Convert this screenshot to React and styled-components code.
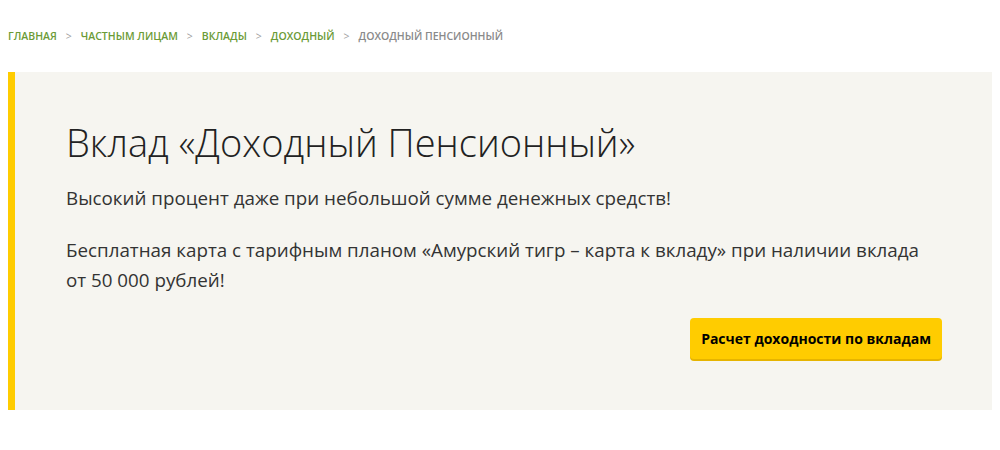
import React from "react";
import styled, { createGlobalStyle } from "styled-components";

const Global = createGlobalStyle`
  html, body { margin: 0; padding: 0; background: #ffffff; }
  body { font-family: "Open Sans", "Liberation Sans", sans-serif; color: #333; }
`;

const Page = styled.div`
  padding: 0 8px;
  width: 1000px;
  box-sizing: border-box;
`;

const Crumbs = styled.nav`
  display: flex;
  align-items: center;
  gap: 9px;
  height: 72px;
  font-family: "Open Sans", "Liberation Sans", sans-serif;
  font-size: 10.5px;
  font-weight: 600;
  text-transform: uppercase;
  padding-bottom: 1px;
  box-sizing: border-box;
`;

const Crumb = styled.a`
  color: ${(p) => (p.$current ? "#8a8a8a" : "#6b9b37")};
  text-decoration: none;
`;

const Sep = styled.span`
  color: #a0a0a0;
  font-weight: 400;
`;

const Panel = styled.section`
  background: #f6f5f0;
  border-left: 7px solid #ffcc00;
  padding: 45px 50px 51px 51px;
  height: 338px;
  box-sizing: border-box;
  display: flex;
  flex-direction: column;
`;

const Title = styled.h1`
  margin: 0;
  font-family: "Open Sans", "Liberation Sans", sans-serif;
  font-weight: 300;
  font-size: 38px;
  line-height: 50px;
  color: #222;
`;

const Text = styled.p`
  margin: ${(p) => p.$top}px 0 0;
  font-size: 18.8px;
  line-height: 30px;
  color: #333;
  max-width: 870px;
`;

const Actions = styled.div`
  display: flex;
  justify-content: flex-end;
  margin-top: auto;
`;

const Button = styled.button`
  height: 41px;
  padding: 0 11px;
  border: none;
  border-radius: 4px;
  background: #ffcc00;
  box-shadow: 0 2px 0 #e6b400;
  font-family: "Open Sans", "Liberation Sans", sans-serif;
  font-weight: 700;
  font-size: 14px;
  color: #000;
  cursor: pointer;
`;

const items = ["Главная", "Частным лицам", "Вклады", "Доходный"];

export default function App() {
  return (
    <Page>
      <Global />
      <Crumbs>
        {items.map((t) => (
          <React.Fragment key={t}>
            <Crumb href="#">{t}</Crumb>
            <Sep>&gt;</Sep>
          </React.Fragment>
        ))}
        <Crumb $current>Доходный Пенсионный</Crumb>
      </Crumbs>
      <Panel>
        <Title>Вклад «Доходный Пенсионный»</Title>
        <Text $top={16}>Высокий процент даже при небольшой сумме денежных средств!</Text>
        <Text $top={22}>
          Бесплатная карта с тарифным планом «Амурский тигр – карта к вкладу» при наличии вклада от 50 000 рублей!
        </Text>
        <Actions>
          <Button>Расчет доходности по вкладам</Button>
        </Actions>
      </Panel>
    </Page>
  );
}
